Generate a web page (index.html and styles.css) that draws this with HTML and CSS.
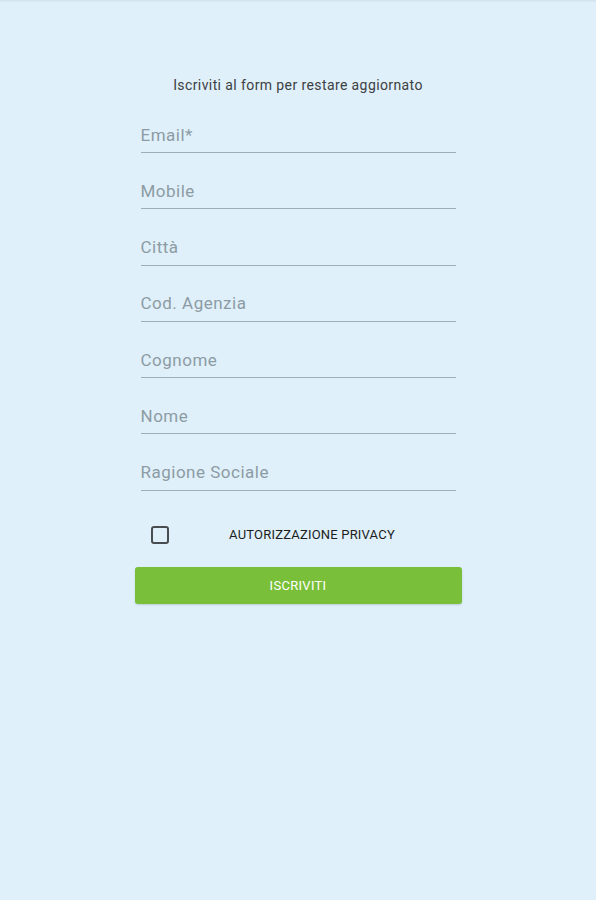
FILE: index.html
```html
<!DOCTYPE html>
<html lang="it">
<head>
  <meta charset="UTF-8" />
  <meta name="viewport" content="width=device-width, initial-scale=1.0"/>
  <title>Iscriviti</title>
  <link rel="stylesheet" href="styles.css">
</head>
<body>
  <div class="topbar"></div>
  <div class="container">
    <p class="intro">Iscriviti al form per restare aggiornato</p>

    <div class="fields">
      <input type="email" placeholder="Email*" />
      <input type="tel" placeholder="Mobile" />
      <input type="text" placeholder="Città" />
      <input type="text" placeholder="Cod. Agenzia" />
      <input type="text" placeholder="Cognome" />
      <input type="text" placeholder="Nome" />
      <input type="text" placeholder="Ragione Sociale" />
    </div>

    <label class="privacy">
      <span class="box"></span>
      <span class="privacy-text">Autorizzazione privacy</span>
    </label>

    <button class="submit">Iscriviti</button>
  </div>
</body>
</html>
```

FILE: styles.css
```css
body {
  margin: 0;
  font-family: Roboto, "Liberation Sans", sans-serif;
  background-color: #dff0fa;
  min-height: 900px;
}
.topbar {
  height: 2px;
  background: linear-gradient(#d2e2ec, #dcedf7);
}
.container {
  width: 327px;
  margin: 0 auto;
  padding-top: 74px;
}
.intro {
  margin: 0;
  font-size: 14px;
  line-height: 18px;
  letter-spacing: 0.4px;
  text-align: center;
  color: #3d4044;
}
.fields {
  padding: 0 6px;
  margin-top: 19px;
}
.fields input {
  display: block;
  width: 100%;
  box-sizing: border-box;
  height: 40px;
  padding: 4px 0 0;
  margin-top: 16.3px;
  border: none;
  border-bottom: 1.5px solid #9fadb5;
  background: transparent;
  font-family: inherit;
  font-size: 17px;
  letter-spacing: 0.5px;
  color: #333;
  outline: none;
}
.fields input:first-child {
  margin-top: 0;
}
.fields input::placeholder {
  color: #8d9ba4;
}
.privacy {
  display: flex;
  align-items: center;
  height: 44px;
  margin-top: 22px;
  padding: 0 6px 0 16px;
}
.box {
  width: 14px;
  height: 14px;
  border: 2px solid #4a4d50;
  border-radius: 3px;
}
.privacy-text {
  flex: 1;
  text-align: center;
  text-transform: uppercase;
  font-size: 13px;
  letter-spacing: 0.2px;
  color: #1c1c1c;
}
.submit {
  display: block;
  width: 100%;
  height: 37px;
  margin-top: 10px;
  border: none;
  border-radius: 3px;
  background-color: #79bf39;
  color: #fff;
  font-family: inherit;
  font-size: 13px;
  text-transform: uppercase;
  letter-spacing: 0.3px;
  box-shadow: 0 1px 2px rgba(0,0,0,0.15);
}
```
